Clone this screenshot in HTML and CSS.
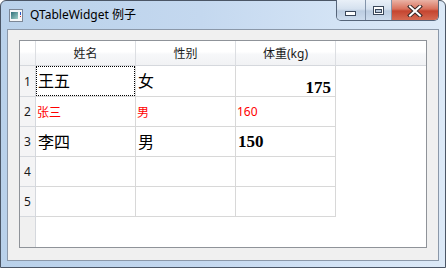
FILE: index.html
```html
<!DOCTYPE html>
<html>
<head>
  <meta charset="utf-8">
  <link rel="stylesheet" href="styles.css">
</head>
<body>
  <div class="window">
    <div class="titlebar">
      <svg class="app-icon" width="14" height="13" viewBox="0 0 14 13">
        <defs>
          <linearGradient id="ig" x1="0" y1="0" x2="1" y2="1">
            <stop offset="0" stop-color="#2f6f7a"/>
            <stop offset="1" stop-color="#9fd0c8"/>
          </linearGradient>
        </defs>
        <rect x="0.5" y="0.5" width="13" height="12" fill="#f4f6f8" stroke="#7c8796"/>
        <rect x="2" y="3" width="7" height="7" fill="url(#ig)"/>
        <rect x="11" y="3" width="1" height="3" fill="#2a58c8"/>
        <rect x="11" y="7" width="1" height="1" fill="#d0302a"/>
      </svg>
      <span class="title">QTableWidget 例子</span>
      <div class="caption-buttons">
        <div class="cap-btn min">
          <svg width="12" height="6" viewBox="0 0 12 6"><rect x="0.5" y="0.5" width="10" height="4" fill="#fff" stroke="#3a475a"/></svg>
        </div>
        <div class="cap-btn max">
          <svg width="12" height="10" viewBox="0 0 12 10"><rect x="0.5" y="0.5" width="10" height="8" fill="#fff" stroke="#3a475a"/><rect x="2.5" y="3.5" width="6" height="3" fill="#b9c9dc" stroke="#3a475a"/></svg>
        </div>
        <div class="cap-btn close">
          <svg width="16" height="12" viewBox="0 0 16 12"><path d="M3 1.5 L13 10.5 M13 1.5 L3 10.5" stroke="#3b2a28" stroke-width="4" stroke-linecap="square"/><path d="M3 1.5 L13 10.5 M13 1.5 L3 10.5" stroke="#fff" stroke-width="2" stroke-linecap="square"/></svg>
        </div>
      </div>
    </div>

    <div class="client">
      <div class="table">
        <div class="corner"></div>
        <div class="hhead">姓名</div>
        <div class="hhead">性别</div>
        <div class="hhead">体重(kg)</div>
        <div class="hhead filler"></div>

        <div class="vhead">1</div>
        <div class="cell big focus">王五</div>
        <div class="cell big">女</div>
        <div class="cell num end">175</div>
        <div class="void"></div>

        <div class="vhead">2</div>
        <div class="cell red">张三</div>
        <div class="cell red">男</div>
        <div class="cell red">160</div>
        <div class="void"></div>

        <div class="vhead">3</div>
        <div class="cell big">李四</div>
        <div class="cell big">男</div>
        <div class="cell num">150</div>
        <div class="void"></div>

        <div class="vhead">4</div>
        <div class="cell"></div>
        <div class="cell"></div>
        <div class="cell"></div>
        <div class="void"></div>

        <div class="vhead">5</div>
        <div class="cell"></div>
        <div class="cell"></div>
        <div class="cell"></div>
        <div class="void"></div>

        <div class="vhead rest"></div>
        <div class="void span"></div>
      </div>
    </div>
  </div>
</body>
</html>
```

FILE: styles.css
```css
html, body {
  margin: 0;
  padding: 0;
}

body {
  width: 446px;
  height: 268px;
  overflow: hidden;
  background: #fff;
  font-family: "Noto Sans", "Noto Sans CJK SC", sans-serif;
}

.window {
  box-sizing: border-box;
  width: 446px;
  height: 268px;
  border: 1px solid #4b5666;
  border-radius: 6px 6px 0 0;
  background: linear-gradient(to right, #b9d1ea 0%, #c4d8ef 45%, #d3e3f5 75%, #dce9f7 100%);
  display: flex;
  flex-direction: column;
}

.titlebar {
  height: 28px;
  display: flex;
  align-items: flex-start;
  flex-shrink: 0;
}

.app-icon {
  margin: 8px 0 0 8px;
  flex-shrink: 0;
}

.title {
  margin: 6px 0 0 7px;
  font-size: 12px;
  line-height: 16px;
  color: #000;
  flex: 1;
  white-space: nowrap;
}

.caption-buttons {
  display: flex;
  margin: -1px 6px 0 0;
  height: 21px;
  border: 1px solid #56657a;
  border-top: none;
  border-radius: 0 0 5px 5px;
  overflow: hidden;
  box-sizing: border-box;
}

.cap-btn {
  display: flex;
  align-items: center;
  justify-content: center;
  padding-top: 1px;
  box-sizing: border-box;
}

.cap-btn.min,
.cap-btn.max {
  background: linear-gradient(to bottom, #e9f0f8 0%, #d5e1ef 45%, #bccde1 55%, #cddcee 100%);
  border-right: 1px solid #8394aa;
}

.cap-btn.min {
  width: 29px;
  padding-top: 7px;
}

.cap-btn.max {
  width: 26px;
}

.cap-btn.close {
  width: 46px;
  background: linear-gradient(to bottom, #eab3a6 0%, #d9715c 45%, #c54530 55%, #d56a52 100%);
}

.client {
  flex: 1;
  margin: 0 6px 6px 6px;
  border: 1px solid #8b98a9;
  background: #f0f0f0;
  padding: 10px 11px 12px 11px;
  display: flex;
}

.table {
  flex: 1;
  border: 1px solid #8f9399;
  background: #fff;
  display: grid;
  grid-template-columns: 16px 100px 100px 100px 1fr;
  grid-template-rows: 25px 31px 30px 30px 30px 30px 1fr;
  font-size: 12px;
}

.corner,
.hhead {
  box-sizing: border-box;
  border-right: 1px solid #dcdee2;
  border-bottom: 1px solid #d5d8dd;
  background: linear-gradient(to bottom, #ffffff 0%, #ffffff 45%, #f7f8fa 55%, #f1f2f4 100%);
}

.hhead {
  display: flex;
  align-items: center;
  justify-content: center;
  color: #1a1a1a;
  padding-bottom: 1px;
}

.hhead.filler {
  border-right: none;
}

.vhead {
  box-sizing: border-box;
  border-right: 1px solid #d5d8dd;
  border-bottom: 1px solid #d5d8dd;
  background: #f4f4f5;
  display: flex;
  align-items: center;
  justify-content: center;
  color: #1a1a1a;
}

.vhead.rest {
  border-bottom: none;
  background: #f0f0f0;
}

.cell {
  position: relative;
  box-sizing: border-box;
  border-right: 1px solid #d8d8d8;
  border-bottom: 1px solid #d8d8d8;
  display: flex;
  align-items: center;
  padding: 0 4px 0 2px;
  color: #000;
  white-space: nowrap;
}

.cell.big {
  font-family: "Noto Sans CJK SC", sans-serif;
  font-size: 16px;
  padding-left: 2px;
  padding-bottom: 2px;
}

.cell.red {
  color: #ff0000;
  padding-left: 1px;
}

.cell.num {
  font-family: "Liberation Serif", serif;
  font-weight: bold;
  font-size: 17px;
}

.cell.end {
  align-items: flex-end;
  justify-content: flex-end;
  line-height: 14px;
  padding-bottom: 1px;
}

.cell.focus::after {
  content: "";
  position: absolute;
  inset: 0;
  border: 1px dotted #000;
}

.void {
  background: #fff;
}

.void.span {
  grid-column: span 4;
}
```
